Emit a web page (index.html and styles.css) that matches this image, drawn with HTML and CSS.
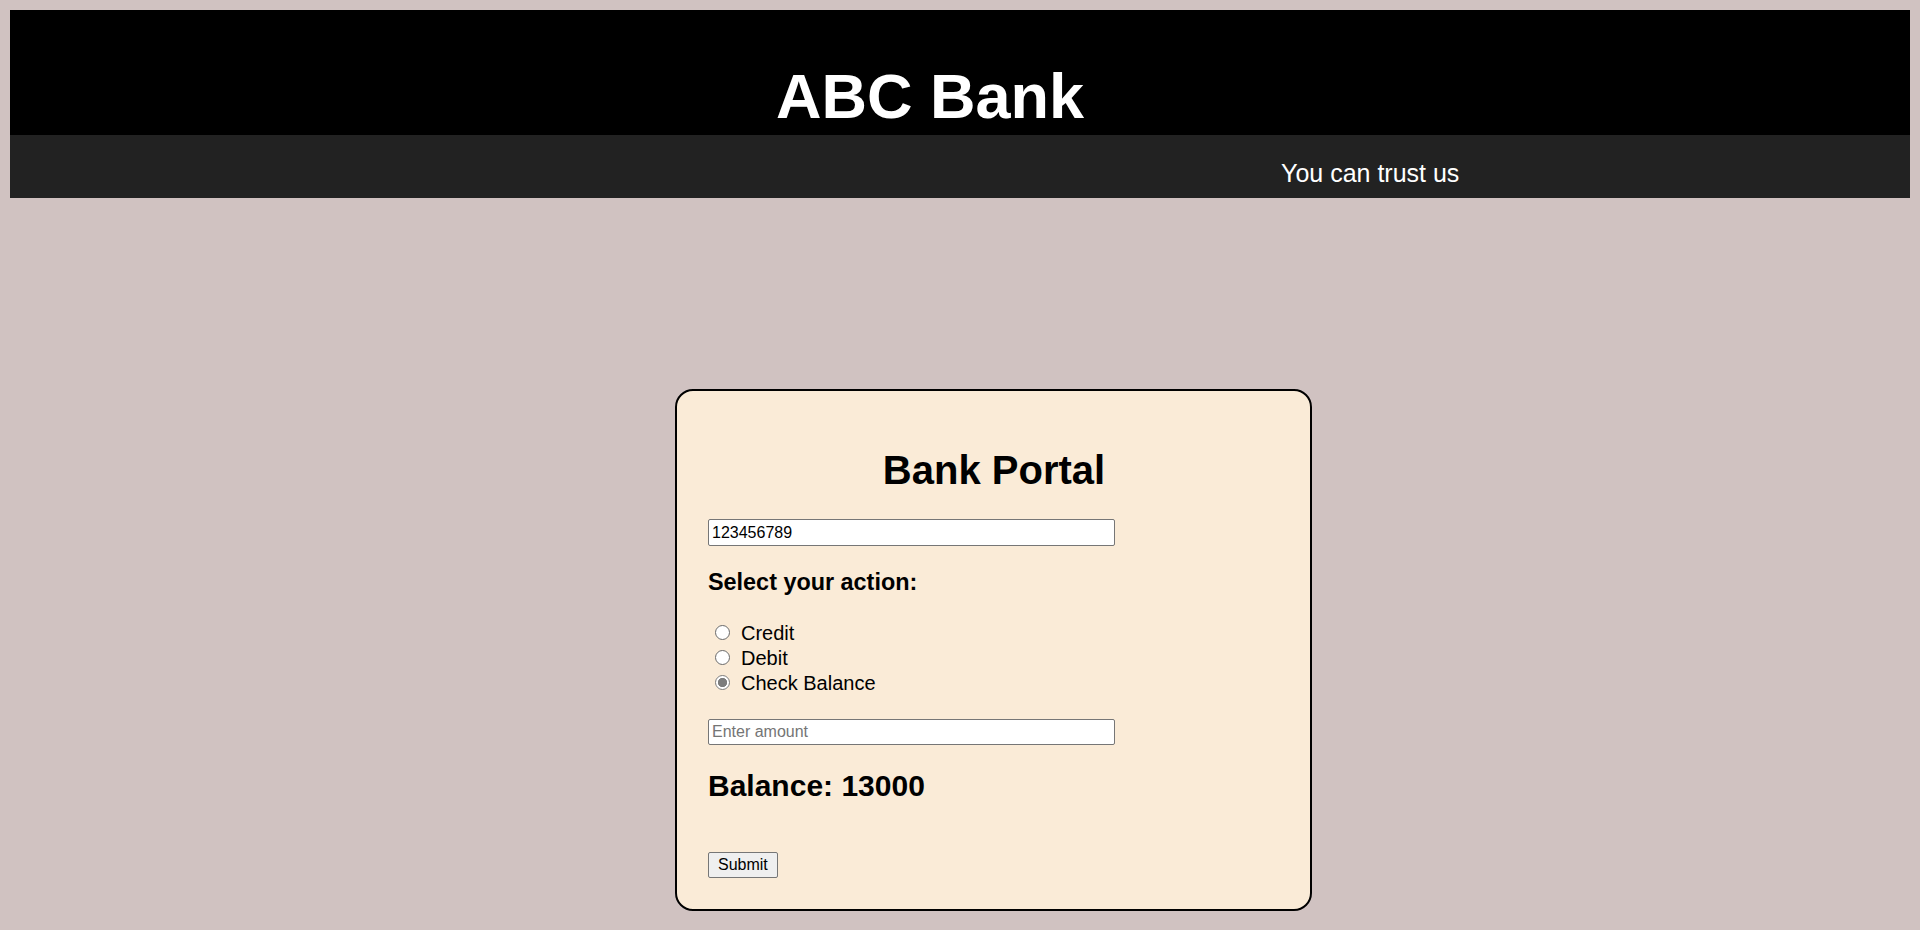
FILE: index.html
```html
<!DOCTYPE html>
<html>
<head>
<meta charset="utf-8">
<title>ABC Bank</title>
<link rel="stylesheet" href="styles.css">
</head>
<body>
<header class="site-header">
  <div class="brand-bar"><h1 class="brand">ABC Bank</h1></div>
  <div class="tagline-bar"><p class="tagline">You can trust us</p></div>
</header>
<main class="main">
  <form class="portal">
    <h1 class="portal-title">Bank Portal</h1>
    <input class="field" type="text" value="123456789">
    <h3 class="section-title">Select your action:</h3>
    <div class="options">
      <label class="option"><input class="radio" type="radio" name="action"><span>Credit</span></label>
      <label class="option"><input class="radio" type="radio" name="action"><span>Debit</span></label>
      <label class="option"><input class="radio" type="radio" name="action" checked><span>Check Balance</span></label>
    </div>
    <input class="field amount" type="text" placeholder="Enter amount">
    <h2 class="balance">Balance: 13000</h2>
    <button class="submit" type="button">Submit</button>
  </form>
</main>
</body>
</html>
```
FILE: styles.css
```css
html, body {
  margin: 0;
  padding: 0;
}
body {
  background: #d0c2c1;
  padding: 10px;
  font-family: "Liberation Sans", Arial, sans-serif;
  font-size: 20px;
  color: #000;
}
.site-header {
  display: flex;
  flex-direction: column;
}
.brand-bar {
  background: #000;
  height: 125px;
  display: flex;
  align-items: flex-end;
  justify-content: center;
  padding-right: 60px;
}
.brand {
  margin: 0 0 3px 0;
  color: #fff;
  font-size: 63px;
  font-weight: bold;
  line-height: 72px;
}
.tagline-bar {
  background: #222;
  height: 63px;
  box-sizing: border-box;
  padding-top: 24px;
  padding-left: 1271px;
}
.tagline {
  margin: 0;
  color: #fff;
  font-size: 25px;
  line-height: 29px;
}
.main {
  display: flex;
  padding-top: 191px;
  padding-left: 665px;
}
.portal {
  width: 572px;
  background: #faebd7;
  border: 2px solid #000;
  border-radius: 18px;
  padding: 30px 30px 31px 31px;
  display: flex;
  flex-direction: column;
  align-items: flex-start;
}
.portal-title {
  align-self: stretch;
  text-align: center;
  font-size: 40px;
  line-height: 46px;
  margin: 26px 0 26px 0;
}
.field {
  box-sizing: border-box;
  width: 407px;
  height: 27px;
  margin: 0;
  padding: 1px 3px;
  border: 1px solid #767676;
  border-radius: 2px;
  background: #fff;
  font-family: "Liberation Sans", Arial, sans-serif;
  font-size: 16px;
  color: #000;
}
.field::placeholder {
  color: #757575;
}
.amount {
  height: 26px;
  margin-top: 23px;
}
.section-title {
  font-size: 23.4px;
  line-height: 27px;
  margin: 23px 0 25px 0;
}
.options {
  display: flex;
  flex-direction: column;
}
.option {
  display: flex;
  align-items: center;
  height: 25px;
  line-height: 25px;
}
.radio {
  appearance: none;
  -webkit-appearance: none;
  box-sizing: border-box;
  width: 15px;
  height: 15px;
  margin: 0 11px 0 7px;
  border: 1px solid #6a6a6a;
  border-radius: 50%;
  background: #fff;
  position: relative;
  top: -1px;
}
.radio:checked {
  background: radial-gradient(circle, #7d7d7d 0 4.3px, #fff 5px);
  border-color: #7d7d7d;
}
.balance {
  font-size: 30px;
  line-height: 34px;
  margin: 24px 0 49px 0;
}
.submit {
  box-sizing: border-box;
  height: 26px;
  padding: 1px 9px;
  border: 1px solid #767676;
  border-radius: 2px;
  background: #efefef;
  font-family: "Liberation Sans", Arial, sans-serif;
  font-size: 16px;
  color: #000;
}
```
